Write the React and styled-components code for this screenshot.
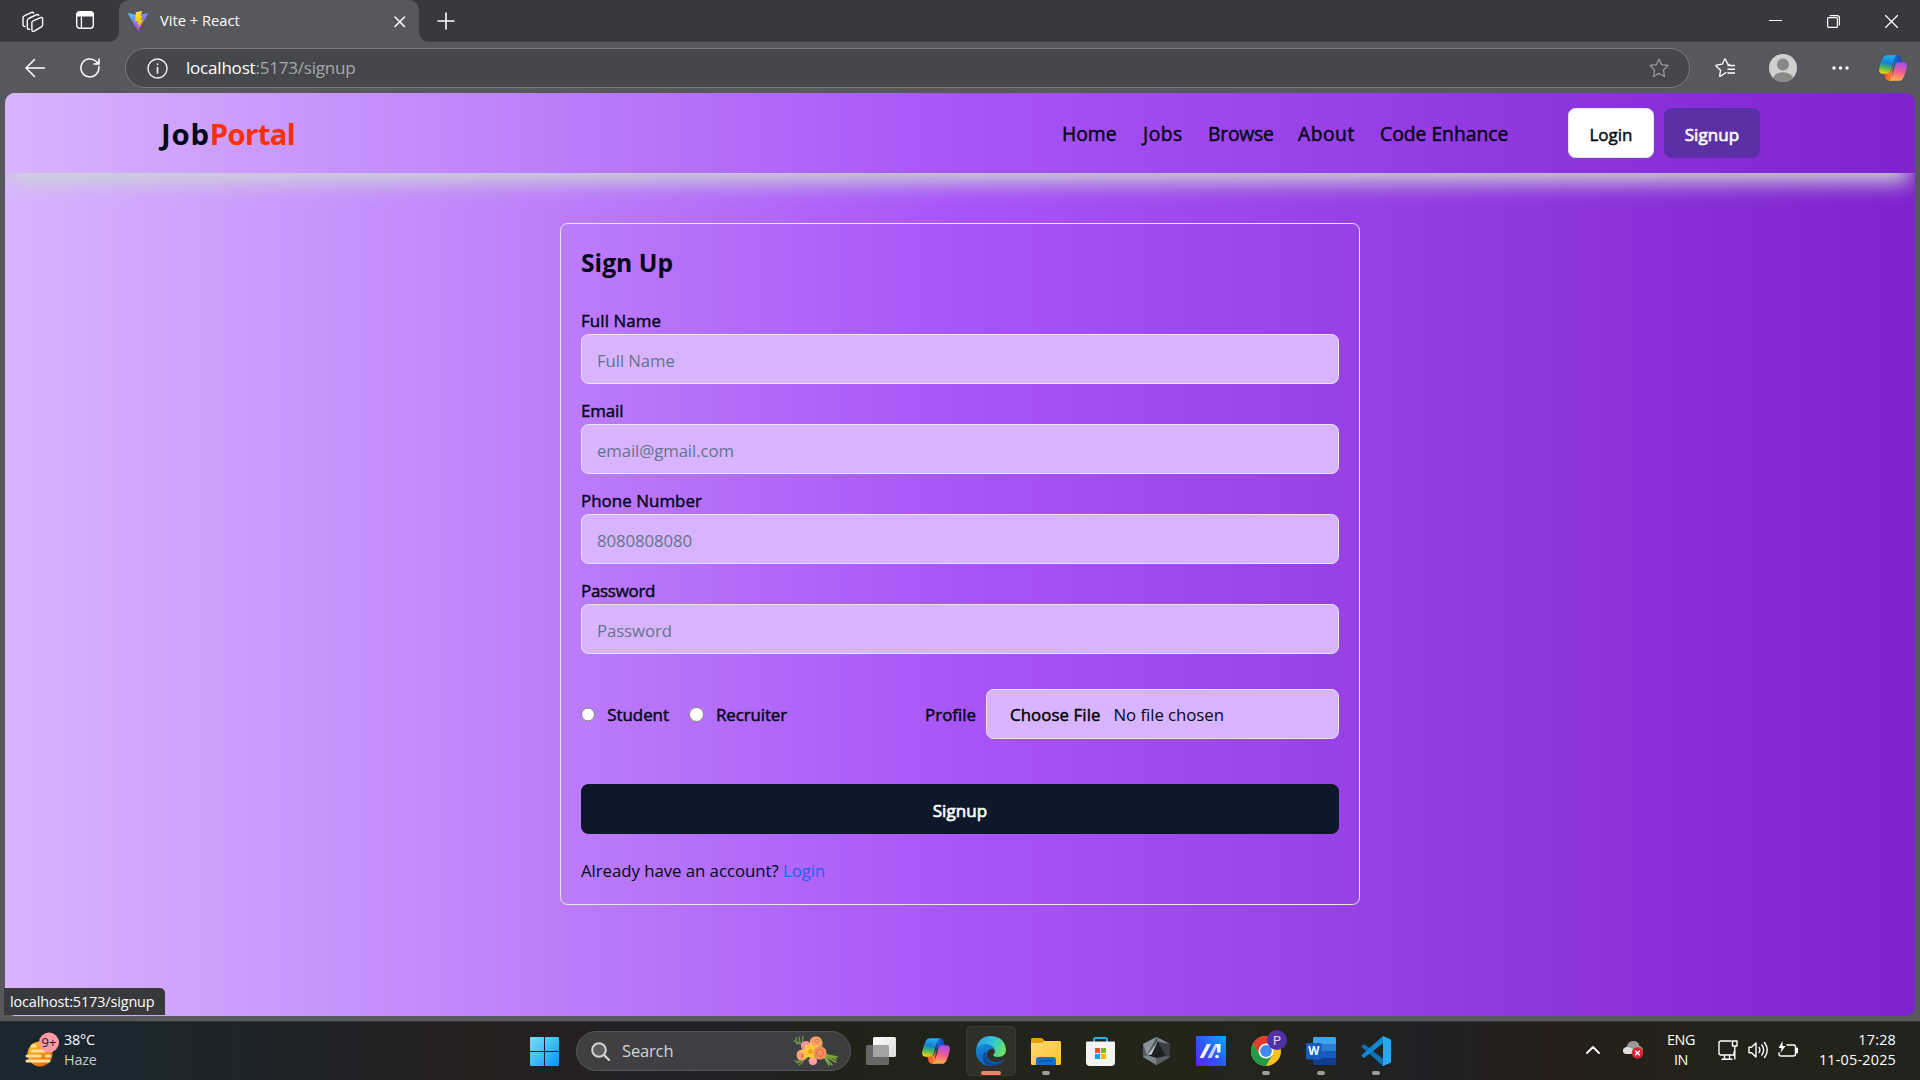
import React from 'react';
import styled, { createGlobalStyle, css } from 'styled-components';

const GlobalStyle = createGlobalStyle`
  * { box-sizing: border-box; }
  html, body { margin: 0; height: 100%; overflow: hidden; background: #57585c; }
  body { font-family: "Open Sans", "Noto Sans", sans-serif; }
`;

const purple = css`background: linear-gradient(to right, #d8b4fe, #a855f7 50%, #7e22ce);`;
const medium = css`-webkit-text-stroke: 0.45px currentColor;`;

const Screen = styled.div`
  width: 1920px; height: 1080px; display: flex; flex-direction: column; overflow: hidden; background: #57585c;
`;

/* ---------- browser chrome ---------- */
const TabBar = styled.div`
  height: 42px; display: flex; background: #38393c; border-bottom: 1px solid #414246; color: #fff;
`;
const TabTools = styled.div`
  width: 119px; padding: 11px 0 0 22px; display: flex; align-items: flex-start; gap: 32px;
`;
const Tab = styled.div`
  position: relative; width: 300px; height: 42px; display: flex; align-items: center; padding: 0 12px 0 9px;
  background: #57585c; border-radius: 10px 10px 0 0;
  &::before, &::after { content: ''; position: absolute; bottom: 0; width: 10px; height: 10px; }
  &::before { left: -10px; background: radial-gradient(circle at 0 0, transparent 9.5px, #57585c 10px); }
  &::after { right: -10px; background: radial-gradient(circle at 100% 0, transparent 9.5px, #57585c 10px); }
`;
const TabTitle = styled.span`
  flex: 1; margin-left: 12px; font-size: 14.7px; line-height: 20px; padding-bottom: 3px;
`;
const NewTab = styled.div`width: 53px; display: flex; justify-content: center; align-items: center;`;
const WindowControls = styled.div`
  margin-left: auto; display: flex; align-items: center; gap: 45px; padding: 1px 22px 0 0;
`;
const Toolbar = styled.div`
  height: 51px; display: flex; align-items: center; padding: 0 13px 0 25px; background: #57585c; color: #fff;
`;
const NavIcons = styled.div`width: 100px; display: flex; gap: 35px;`;
const Address = styled.div`
  width: 1565px; height: 40px; display: flex; align-items: center; padding: 0 20px 0 21px; border: 1px solid #7a7b7f;
  border-radius: 20px; background: #46474a; color: #a6a7a9; margin-top: 1px;
`;
const Url = styled.div`
  flex: 1; margin-left: 18px; font-size: 17px; line-height: 24px; letter-spacing: -0.2px; padding-bottom: 1px;
  b { font-weight: 400; color: #fff; }
`;
const InfoMark = styled.span`display: flex; color: #f0f0f0;`;
const ToolIcons = styled.div`margin-left: auto; display: flex; align-items: center;`;
const Slot = styled.span`display: flex; justify-content: ${p => (p.$end ? 'flex-end' : 'center')}; width: ${p => p.$w}px;`;

/* ---------- page ---------- */
const Viewport = styled.div`
  position: relative; height: 928px; padding: 0 5px;
`;
const Page = styled.div`
  height: 923px; overflow: hidden; border-radius: 10px; ${purple}
`;
const Header = styled.header`
  position: relative; height: 80px; display: flex; justify-content: center; ${purple}
  box-shadow: 0 15px 20px -6px #ccd6d6;
`;
const HeaderInner = styled.div`
  width: 1600px; display: flex; align-items: center; justify-content: space-between;
`;
const Logo = styled.h1`
  margin: 0; padding: 2px 0 0 1px; font-size: 29.3px; line-height: 36px; font-weight: 700; letter-spacing: 0.8px; color: #020817;
  span { color: #f83002; letter-spacing: -0.65px; }
`;
const HeaderRight = styled.div`display: flex; align-items: center; gap: 60px;`;
const Menu = styled.nav`display: flex; gap: 25px; padding-top: 2px;`;
const MenuItem = styled.a`
  width: ${p => p.$w}px; font-size: 19.3px; line-height: 28px; white-space: nowrap; color: #020817;
  letter-spacing: ${p => p.$ls || 0}px; text-indent: ${p => p.$indent || 0}px; ${medium}
`;
const Actions = styled.div`display: flex; gap: 10px;`;
const ActionButton = styled.button`
  width: ${p => p.$w}px; height: 50px; padding: 3px 0 0; border-radius: 7.5px; font: 400 17px/24px "Open Sans", sans-serif;
  border: 1px solid ${p => (p.$solid ? '#5b30a6' : '#e2e8f0')};
  background: ${p => (p.$solid ? '#5b30a6' : '#fff')};
  color: ${p => (p.$solid ? '#f8fafc' : '#020817')}; ${medium}
  ${p => p.$solid && '-webkit-text-stroke-width: 0.7px; letter-spacing: 0.1px;'}
`;
const Card = styled.form`
  width: 800px; height: 682px; margin: 50px auto 0; padding: 20px; display: flex; flex-direction: column;
  border: 1px solid #e5e7eb; border-radius: 7.5px;
`;
const Title = styled.h2`
  margin: 0 0 24px; padding-top: 1px; font-size: 24.7px; line-height: 35px; font-weight: 700; color: #020817;
`;
const Fields = styled.div`display: flex; flex-direction: column; gap: 10px;`;
const Field = styled.div`display: flex; flex-direction: column;`;
const Label = styled.label`
  font-size: 16.9px; line-height: ${p => (p.$inline ? 28 : 27)}px; padding-top: ${p => (p.$inline ? 1 : 3)}px;
  white-space: nowrap; color: #020817; letter-spacing: ${p => p.$ls || 0}px; ${medium}
`;
const TextInput = styled.input`
  height: 50px; padding: 3px 15px 0; border: 1px solid #e2e8f0; border-radius: 7.5px; background: #d8b4fe;
  font: 400 16.8px/24px "Open Sans", sans-serif; letter-spacing: -0.1px; outline: 0;
  &::placeholder { color: #64748b; opacity: 1; }
`;
const RoleRow = styled.div`
  height: 50px; margin-top: 35px; display: flex; align-items: center; justify-content: space-between;
`;
const Roles = styled.div`display: flex; gap: 20px;`;
const Role = styled.div`display: flex; align-items: center; gap: 12px; width: ${p => p.$w}px;`;
const Radio = styled.input`width: 15px; height: 15px; margin: 0;`;
const Profile = styled.div`display: flex; align-items: center; gap: 10px;`;
const FileBox = styled.div`
  width: 353px; height: 50px; padding: 1px 23px 0; display: flex; align-items: center; gap: 13px;
  border: 1px solid #e2e8f0; border-radius: 7.5px; background: #d8b4fe; color: #020817;
  font-size: 16.8px; letter-spacing: -0.05px;
  b { font-weight: 400; color: #000; letter-spacing: 0.1px; ${medium} }
`;
const Submit = styled.button`
  height: 50px; margin-top: 45px; padding: 3px 0 0; border: 0; border-radius: 7.5px; background: #0f172a; color: #f8fafc;
  font: 400 17px/24px "Open Sans", sans-serif; letter-spacing: 0.1px; ${medium} -webkit-text-stroke-width: 0.7px;
`;
const Hint = styled.p`
  margin: 24px 0 0; font-size: 16.8px; line-height: 25px; letter-spacing: -0.04px; color: #020817;
  a { color: #2563eb; }
`;
const StatusBubble = styled.div`
  position: absolute; left: 4px; bottom: 6px; width: 161px; height: 27px; padding-left: 6px;
  font-size: 14.4px; line-height: 27px; letter-spacing: -0.12px; color: #fff; background: #38393c; border-radius: 0 5px 0 0;
`;

/* ---------- taskbar ---------- */
const Taskbar = styled.div`
  height: 59px; display: flex; align-items: center; color: #fff; padding-right: 24px; border-top: 1px solid #303336;
  background: linear-gradient(to right, #1b262e 0, #1c252c 200px, #26201f 480px, #212127 700px, #212218 860px, #242519 1200px, #202124 1420px, #261f19 1560px, #21231b 1750px, #22231c);
`;
const Weather = styled.div`width: 519px; padding: 0 0 2px 24px; display: flex; gap: 4px; align-items: center;`;
const Lines = styled.div`
  display: flex; flex-direction: column; font-size: 14.4px; line-height: 20px; text-align: ${p => p.$align || 'left'};
  letter-spacing: ${p => p.$ls || 0}px; white-space: nowrap;
`;
const Muted = styled.span`color: #c6cacd;`;
const Apps = styled.div`display: flex; align-items: center; gap: 5px;`;
const AppTile = styled.div`
  position: relative; width: 50px; height: 50px; display: flex; align-items: center; justify-content: center; border-radius: 5px;
  ${p => p.$active && 'background: #2f3027; box-shadow: inset 0 0 0 1px #393a31;'}
  ${p => p.$open && css`
    &::after {
      content: ''; position: absolute; bottom: 1px; left: 50%; transform: translateX(-50%);
      width: ${p.$active ? 20 : 8}px; height: 4px; border-radius: 2px; background: ${p.$active ? '#f7806a' : '#9c9c98'};
    }`}
`;
const SearchPill = styled.div`
  width: 275px; height: 40px; margin: 0 0 0 2px; padding: 0 12px 0 14px; display: flex; align-items: center;
  border: 1px solid #55565a; border-radius: 20px; background: linear-gradient(to right, #423f40, #3e4046 60%, #3c3e3c);
  font-size: 16.5px; letter-spacing: -0.15px; color: #d4d4d4;
  span { flex: 1; margin-left: 12px; padding-bottom: 2px; }
`;
const Tray = styled.div`
  margin-left: auto; display: flex; align-items: center; padding-bottom: 2px;
`;

/* ---------- drawings ---------- */
const Line = ({ w, h, box, sw = 1.5, children, ...rest }) => (
  <svg width={w} height={h} viewBox={box || `0 0 ${w} ${h}`} fill="none" stroke="currentColor" strokeWidth={sw}
    strokeLinecap="round" strokeLinejoin="round" {...rest}>{children}</svg>
);

const Workspaces = () => (
  <Line w={22} h={22} sw={1.4}>
    <path d="M10.600 10.200 18.600 6.600q2-.8 2 1.300v6q0 1.400-1.200 2l-7.200 4.200q-2.300 1-2.300-1.300v-6.700q0-1.300.7-1.900Z" />
    <path d="M7.500 18.200q-2.200.4-2.200-1.900V9.600q0-1.400 1.300-2.100L14 3.800q1.900-.8 2.700.5" />
    <path d="M3 15.500Q1 15.500 1 13.300V6.900q0-1.400 1.300-2L9 1.600q1.800-.7 2.700.4" />
  </Line>
);
const TabActions = () => (
  <svg width="18" height="18" viewBox="0 0 18 18"><rect x=".7" y=".7" width="16.6" height="16.6" rx="3" fill="none" stroke="#fff" strokeWidth="1.4" />
    <path d="M.5 5.5V3.2Q.5.5 3.2.5h11.6q2.7 0 2.7 2.7v2.3Z" fill="#fff" /><path d="M5.4 5v12.5" stroke="#fff" strokeWidth="1.3" /></svg>
);
const ViteLogo = () => (
  <svg width="20" height="20" viewBox="0 0 20 20">
    <defs>
      <linearGradient id="va" x1="0" y1="0" x2=".6" y2="1"><stop stopColor="#41d1ff" /><stop offset="1" stopColor="#bd34fe" /></linearGradient>
      <linearGradient id="vb" x1=".4" y1="0" x2=".6" y2="1"><stop stopColor="#ffea83" /><stop offset=".15" stopColor="#ffdd35" /><stop offset="1" stopColor="#ffa800" /></linearGradient>
    </defs>
    <path d="M19.8 3 10.6 19.5q-.4.6-.8 0L.1 3q-.3-.8.5-.8L10 3.900l9.300-1.700q.8 0 .5.800Z" fill="url(#va)" />
    <path d="M14.400 0 7.900 1.200l-.600 9 2.700-.5-.800 3.800 1.800-.4-.9 5 5-9.300-2.900.5 2.300-4.500-2.200.3Z" fill="url(#vb)" />
  </svg>
);
const Star = ({ lines }) => (
  <Line w={20} h={20} sw={1.3}>
    {lines ? (
      <><path d="M11 14.500 5.300 18.300q-.8.300-.600-.600l.9-5.500L1 8q-.4-.700.400-.9L7.200 6.200 9.600 1.200q.400-.7.8 0l2.400 4.900 1.500.3" /><path d="M12.500 7.500h7.500M12.500 11.300h7.500M12.500 15h7.500" strokeWidth="1.500" strokeLinecap="butt" /></>
    ) : <path d="M10 1.200 12.600 6.700 19 7.500 14.400 12l1.100 6.500L10 15.400l-5.500 3.100L5.600 12 1 7.500l6.400-.8Z" stroke="#97989a" />}
  </Line>
);
const Avatar = () => (
  <svg width="28" height="28" viewBox="0 0 28 28"><defs><clipPath id="av"><circle cx="14" cy="14" r="14" /></clipPath></defs>
    <g clipPath="url(#av)"><rect width="28" height="28" fill="#d2d0ce" /><circle cx="14" cy="10.500" r="6" fill="#8a8886" /><ellipse cx="14" cy="26" rx="10.500" ry="7.800" fill="#8a8886" /></g></svg>
);
const Copilot = ({ id, size = 28 }) => (
  <svg width={size} height={size * 26 / 28} viewBox="0 0 28 26">
    <defs>
      <linearGradient id={`${id}a`} x1=".5" y1="0" x2=".3" y2="1"><stop stopColor="#22b2f0" /><stop offset=".4" stopColor="#1380d8" /><stop offset=".68" stopColor="#4cb85c" /><stop offset="1" stopColor="#f5d40c" /></linearGradient>
      <linearGradient id={`${id}b`} x1=".5" y1="0" x2=".3" y2="1"><stop stopColor="#ffae4c" /><stop offset=".45" stopColor="#f4608c" /><stop offset="1" stopColor="#a44cf0" /></linearGradient>
      <linearGradient id={`${id}c`}><stop stopColor="#1a70e0" /><stop offset="1" stopColor="#1240bc" /></linearGradient>
      <linearGradient id={`${id}d`}><stop stopColor="#f2502e" /><stop offset="1" stopColor="#ff8a3c" /></linearGradient>
    </defs>
    <path d="M15 .2h3.200q2.600 0 3.400 3l1.200 4.500h-4q-2.300 0-3 2.300l-1.500 5Z" fill={`url(#${id}c)`} />
    <path d="M13 25.800H9.800q-2.600 0-3.400-3L5.200 18.300h4q2.300 0 3-2.300l1.500-5Z" fill={`url(#${id}d)`} />
    <path d="M8.200.2H18q-2 .3-2.800 3L11.500 16q-.8 2.800-3.500 2.800H4Q-.8 18.800.3 13.600 1.500 8 3.600 3.300 5 .2 8.200.2Z" fill={`url(#${id}a)`} />
    <path d="M8.200.2H18q-2 .3-2.800 3L11.500 16q-.8 2.800-3.500 2.800H4Q-.8 18.800.3 13.600 1.500 8 3.600 3.300 5 .2 8.200.2Z" fill={`url(#${id}b)`} transform="rotate(180 14 13)" />
  </svg>
);
const HazeIcon = () => (
  <svg width="36" height="36" viewBox="0 0 36 36">
    <defs><linearGradient id="sun" x1="0" y1="0" x2=".6" y2="1"><stop stopColor="#ffc928" /><stop offset="1" stopColor="#ee6c05" /></linearGradient></defs>
    <circle cx="16" cy="22" r="12.500" fill="url(#sun)" />
    <g stroke="#fbdfa0" strokeWidth="3" strokeLinecap="round"><path d="M8 14h3M8 19h13M3 24h13M22.500 24h3M3 29h22" /></g>
    <circle cx="25" cy="10.500" r="10" fill="#ff99a4" />
    <text x="25" y="15" fontSize="13" textAnchor="middle" fill="#1b1b1b" fontFamily="Open Sans, sans-serif">9+</text>
  </svg>
);
const WindowsLogo = () => (
  <svg width="29" height="29" viewBox="0 0 29 29"><defs><linearGradient id="win" gradientUnits="userSpaceOnUse" x1="0" y1="0" x2="29" y2="29"><stop stopColor="#7ad9fb" /><stop offset=".5" stopColor="#3dbff8" /><stop offset="1" stopColor="#0a93f5" /></linearGradient></defs>
    <path d="M1 0h13v14H0V1Q0 0 1 0ZM15 0h13q1 0 1 1v13H15ZM0 15h14v14H1q-1 0-1-1ZM15 15h14v13q0 1-1 1H15Z" fill="url(#win)" /></svg>
);
const Bouquet = () => (
  <svg width="45" height="32" viewBox="0 0 45 32">
    <g stroke="#728a4a" strokeWidth="1.500" fill="none" strokeLinecap="round">
      <path d="M1 6l10 4M3 3l1 6M6 2l1 7M10 1.500 9 9M4 28l9-5M2 26l5 1M5 23l2 4M9 23l0 3M6 30l4-3" />
      <path d="M30 19 44 22M30 20l13 7M30 20l9 10M30 20l6 10M31 19l12 5" stroke="#7fa83e" />
    </g>
    <path d="M24 5l6 2-1 8ZM14 24l8 4-3 3Z" fill="#6f9647" />
    <circle cx="13" cy="11" r="5" fill="#ff8fa6" /><circle cx="20" cy="26" r="4" fill="#ff9cab" />
    <circle cx="23" cy="7.500" r="6.300" fill="#f8a06a" /><circle cx="9" cy="20" r="5.500" fill="#f9a277" /><circle cx="10" cy="21" r="2.300" fill="#e97d50" />
    <path d="M18 7l2 4 6-1-2 5 4 4-6 1-1 5-5-3-6 2 1-5-4-3 5-2 0-5 4 1Z" fill="#ffc83c" /><circle cx="17.500" cy="16.500" r="2.500" fill="#eda51e" />
    <circle cx="27" cy="18" r="6.600" fill="#f4905f" /><circle cx="27" cy="18" r="3.500" fill="none" stroke="#dc6f43" /><circle cx="24" cy="6" r="2" fill="none" stroke="#e57d4d" />
  </svg>
);
const TaskView = () => (
  <svg width="30" height="28" viewBox="0 0 30 28"><defs><linearGradient id="tv" x1="0" y1="0" x2="1" y2="1"><stop stopColor="#fff" /><stop offset="1" stopColor="#dadada" /></linearGradient></defs>
    <rect y="8" width="23" height="20" rx="1.500" fill="#676866" /><rect x="7" width="23" height="20" rx="1.500" fill="url(#tv)" /><path d="M7 8h14.500q1.500 0 1.500 1.500V20H8.500Q7 20 7 18.500Z" fill="#a3a4a3" /></svg>
);
const EdgeLogo = () => (
  <svg width="30" height="30" viewBox="0 0 30 30">
    <defs>
      <linearGradient id="ea" x1="0" y1=".3" x2="1" y2=".6"><stop stopColor="#2b9fe6" /><stop offset=".5" stopColor="#2fc4dc" /><stop offset="1" stopColor="#6fe35b" /></linearGradient>
      <linearGradient id="eb" x1="0" y1="0" x2=".5" y2="1"><stop stopColor="#1b8fe0" /><stop offset="1" stopColor="#0a5cb8" /></linearGradient>
    </defs>
    <path d="M.1 14Q1 7 9 7q9 0 10.500 7l-3.500-1.500q-6 1.500-5 8.500 2.500 5.500 9.500 5 4-.2 7-2.800.6-.3.200.6Q23.500 30 15 30 5 30 1 21-.4 17.500.1 14Z" fill="url(#eb)" />
    <path d="M10.700 15.500Q8.500 22 13 25.800q6 4.200 13.800-.8l.800-.6Q23.500 30 15.300 30 7 28.500 6.500 21q0-4 4.200-5.500Z" fill="#0d4795" />
    <path d="M.2 13.500Q2 0 15 0 28.500.8 30 13.300q.2 7.300-8 7.700-5-.1-4.700-2.200Q19 17.500 19 15 18 8.800 10.500 8 3 8 .2 13.500Z" fill="url(#ea)" />
  </svg>
);
const Folder = () => (
  <svg width="30" height="27" viewBox="0 0 30 27"><defs><linearGradient id="fo" x1="0" y1="0" x2="1" y2="1"><stop stopColor="#ffdc72" /><stop offset="1" stopColor="#fdc02b" /></linearGradient></defs>
    <path d="M0 8V1.500Q0 0 1.500 0H10q1 0 1.800.8L14 3h14.500Q30 3 30 5v4Z" fill="#dfa20c" /><path d="M0 5h10q1.500 0 2.500-1l1-1h15Q30 3 30 4.500v21q0 1.500-1.500 1.500h-27Q0 27 0 25.500Z" fill="url(#fo)" />
    <path d="M5 27v-5q0-3 3-3h14q3 0 3 3v5Z" fill="#0f72c6" /><path d="M9 22.800h12" stroke="#0b4f96" strokeWidth="1.500" strokeLinecap="round" /></svg>
);
const Store = () => (
  <svg width="30" height="29" viewBox="0 0 30 29"><path d="M8 6V2.500Q8 1 9.500 1h10Q21 1 21 2.500V6" fill="none" stroke="#27b3e8" strokeWidth="2" />
    <path d="M0 5.500Q0 4.500 1 4.500h27q1 0 1 1V25q0 4-4 4H4q-4 0-4-4Z" fill="#f4f4f4" /><path d="M9 11h5v5H9Z" fill="#f25022" /><path d="M15 11h5v5h-5Z" fill="#7fba00" /><path d="M9 17h5v5H9Z" fill="#00a4ef" /><path d="M15 17h5v5h-5Z" fill="#ffb900" /></svg>
);
const Armoury = () => (
  <svg width="27" height="28" viewBox="0 0 27 28"><path d="M13.500 0 27 7v13l-13.500 8L0 20V7Z" fill="#565d64" /><path d="M13.500 0 27 7 16 5Z" fill="#7d848b" /><path d="M0 7 13.500 0 4 18Z" fill="#8b9299" /><path d="M27 7v13l-5-1-7-14Z" fill="#3a3f44" /><path d="M0 20l4-2 9.500 3v7Z" fill="#7c8389" /><path d="M13.500 28v-7l9-2L27 20Z" fill="#595f65" /><path d="M15 4.500 22.500 19 13.500 21 4.500 18Z" fill="#1d2023" /><path d="M14.500 5 4.500 18l4-.500Z" fill="#c3c8cc" /></svg>
);
const MyAsus = () => (
  <svg width="30" height="30" viewBox="0 0 30 30"><defs><linearGradient id="ma" x1="0" y1="1" x2="1" y2="0"><stop stopColor="#5f20f5" /><stop offset=".5" stopColor="#2a5cf5" /><stop offset="1" stopColor="#08a9fb" /></linearGradient></defs>
    <rect width="30" height="30" fill="url(#ma)" /><path d="M3.500 22 10.800 8H15L7.500 22Z" fill="#f3f6ff" /><path d="M11.500 22 19 8h3L15.500 22Z" fill="#c6d3ff" /><path d="M20 8h4.500v8.500H21V12Z" fill="#fff" /><circle cx="21" cy="20.500" r="1.800" fill="#fff" /></svg>
);
const ChromeMark = styled.svg`width: 36px; height: 36px; margin: 0 0 6px 6px; flex: none;`;
const Chrome = () => (
  <ChromeMark viewBox="0 0 36 36">
    <g transform="translate(0 6)"><circle cx="15" cy="15" r="15" fill="#fcc31e" />
      <path d="M2 7.500A15 15 0 0 1 28 7.500H15L8.500 18.700Z" fill="#e33b2e" /><path d="M2 7.500A15 15 0 0 0 15 30L21.500 18.700 8.500 18.700Z" fill="#229a4a" />
      <circle cx="15" cy="15" r="7.500" fill="#fff" /><circle cx="15" cy="15" r="5.900" fill="#4286f0" /></g>
    <circle cx="26" cy="10" r="10" fill="#5130a4" />
    <text x="26" y="14.500" fontSize="12.500" textAnchor="middle" fill="#e4dcf8" fontFamily="Roboto, sans-serif">P</text>
  </ChromeMark>
);
const Word = () => (
  <svg width="30" height="28" viewBox="0 0 30 28"><path d="M7 1.500Q7 0 8.500 0h20Q30 0 30 1.500V7H7Z" fill="#41a5ee" /><path d="M7 7h23v7H7Z" fill="#2b7cd3" /><path d="M7 14h23v7H7Z" fill="#185abd" /><path d="M7 21h23v5.500q0 1.500-1.500 1.500h-20Q7 28 7 26.500Z" fill="#103f91" />
    <rect y="6" width="15.500" height="16.500" rx="1.300" fill="#185abd" /><text x="7.700" y="18.200" fontSize="11.500" fontWeight="700" textAnchor="middle" fill="#fff" fontFamily="Open Sans, sans-serif">W</text></svg>
);
const VsCode = () => (
  <svg width="30" height="30" viewBox="0 0 30 30"><path d="M.5 10.200 2.200 8.600q.7-.5 1.400 0L22 22.500V30L.6 10.900Q.2 10.500.5 10.200Z" fill="#0b72b8" /><path d="M.5 19.800l1.700 1.600q.7.500 1.400 0L22 7.500V0L.6 19.100q-.4.400-.1.700Z" fill="#1088d2" /><path d="M22 0l7 3q1 .5 1 1.500v21q0 1-1 1.500l-7 3Z" fill="#28a9f1" /><path d="M22 7.500V22.500L12.500 15Z" fill="#22231d" /></svg>
);
const CloudError = () => (
  <svg width="21" height="18" viewBox="0 0 21 18"><path d="M4 13Q0 13 0 9.500 0 6.500 3.500 6 5 0 10.500 0q5 0 6 5Q20 6 20 9.500 20 13 16.500 13Z" fill="#9a9a98" /><path d="M4 13Q0 13 0 9.500 0 6.500 4 6q4 0 7 3l4 4Z" fill="#dedede" /><circle cx="14.500" cy="12" r="5.800" fill="#dc2334" /><path d="m12.200 9.700 4.600 4.600m0-4.600-4.600 4.600" stroke="#fff" strokeWidth="1.500" /></svg>
);

const FIELDS = [
  { label: 'Full Name', hint: 'Full Name', ls: 0.1 },
  { label: 'Email', hint: 'email@gmail.com', ls: -0.1 },
  { label: 'Phone Number', hint: '8080808080', ls: 0.05 },
  { label: 'Password', hint: 'Password', ls: -0.25 },
];
const MENU = [['Home', 55], ['Jobs', 41, 0.5, 1], ['Browse', 65, -0.2], ['About', 57, 0.5], ['Code Enhance', 128]];

export default function App() {
  return (
    <Screen>
      <GlobalStyle />
      <TabBar>
        <TabTools><Workspaces /><TabActions /></TabTools>
        <Tab>
          <ViteLogo /><TabTitle>Vite + React</TabTitle>
          <Line w={14} h={14}><path d="m2 3 9.500 9.500M11.500 3 2 12.500" /></Line>
        </Tab>
        <NewTab><Line w={18} h={18} sw={1.6}><path d="M9 1v16M1 9h16" /></Line></NewTab>
        <WindowControls>
          <Line w={13} h={13} sw={1.2}><path d="M0 5.500h13" /></Line>
          <Line w={13} h={13} sw={1.2}><rect x=".6" y="2.600" width="9.800" height="9.800" rx="1" /><path d="M3 .6h7.200q2.200 0 2.200 2.200V10" /></Line>
          <Line w={13} h={13} sw={1.3}><path d="m.5.5 12 12m0-12-12 12" /></Line>
        </WindowControls>
      </TabBar>
      <Toolbar>
        <NavIcons>
          <Line w={20} h={20}><path d="M19.500 10H1M9.500 1.500 1 10l8.500 8.500" /></Line>
          <Line w={20} h={20}><path d="M18.800 8.500A9 9 0 1 1 16 3.300l2.500 2M19 1v5h-5" /></Line>
        </NavIcons>
        <Address>
          <InfoMark><Line w={21} h={21} sw={1.4}><circle cx="10.500" cy="10.500" r="9.500" /><path d="M10.500 9.500v5.500M10.500 6.200v.1" strokeWidth="1.700" /></Line></InfoMark>
          <Url><b>localhost</b>:5173/signup</Url>
          <Star />
        </Address>
        <ToolIcons>
          <Slot $w={20}><Star lines /></Slot>
          <Slot $w={96}><Avatar /></Slot>
          <Slot $w={18}><svg width="17" height="4" viewBox="0 0 17 4" fill="#fff"><circle cx="2" cy="2" r="1.700" /><circle cx="8.500" cy="2" r="1.700" /><circle cx="15" cy="2" r="1.700" /></svg></Slot>
          <Slot $w={58} $end><Copilot id="tb" /></Slot>
        </ToolIcons>
      </Toolbar>
      <Viewport>
        <Page>
          <Header>
            <HeaderInner>
              <Logo>Job<span>Portal</span></Logo>
              <HeaderRight>
                <Menu>{MENU.map(([name, w, ls, indent]) => <MenuItem key={name} $w={w} $ls={ls} $indent={indent}>{name}</MenuItem>)}</Menu>
                <Actions><ActionButton $w={86}>Login</ActionButton><ActionButton $w={96} $solid>Signup</ActionButton></Actions>
              </HeaderRight>
            </HeaderInner>
          </Header>
          <Card>
            <Title>Sign Up</Title>
            <Fields>
              {FIELDS.map(f => (
                <Field key={f.label}><Label $ls={f.ls}>{f.label}</Label><TextInput placeholder={f.hint} /></Field>
              ))}
            </Fields>
            <RoleRow>
              <Roles>
                <Role $w={88}><Radio type="radio" name="role" /><Label $inline>Student</Label></Role>
                <Role $w={98}><Radio type="radio" name="role" /><Label $inline $ls={-0.1}>Recruiter</Label></Role>
              </Roles>
              <Profile>
                <Label $inline>Profile</Label>
                <FileBox><b>Choose File</b><span>No file chosen</span></FileBox>
              </Profile>
            </RoleRow>
            <Submit type="button">Signup</Submit>
            <Hint>Already have an account? <a>Login</a></Hint>
          </Card>
        </Page>
        <StatusBubble>localhost:5173/signup</StatusBubble>
      </Viewport>
      <Taskbar>
        <Weather><HazeIcon /><Lines $ls={-0.2}><span>38°C</span><Muted>Haze</Muted></Lines></Weather>
        <Apps>
          <AppTile><WindowsLogo /></AppTile>
          <SearchPill>
            <Line w={19} h={19} sw={2}><circle cx="8" cy="8" r="6.800" fill="#5a5c5e" /><path d="m13 13 5 5" strokeWidth="2.300" /></Line>
            <span>Search</span><Bouquet />
          </SearchPill>
          <AppTile><TaskView /></AppTile>
          <AppTile><Copilot id="tk" /></AppTile>
          <AppTile $active $open><EdgeLogo /></AppTile>
          <AppTile $open><Folder /></AppTile>
          <AppTile><Store /></AppTile>
          <AppTile><Armoury /></AppTile>
          <AppTile><MyAsus /></AppTile>
          <AppTile $open><Chrome /></AppTile>
          <AppTile $open><Word /></AppTile>
          <AppTile $open><VsCode /></AppTile>
        </Apps>
        <Tray>
          <Slot $w={48}><Line w={14} h={8} sw={1.8}><path d="m1 7 6-6 6 6" /></Line></Slot>
          <Slot $w={32}><CloudError /></Slot>
          <Slot $w={64}><Lines $align="center" $ls={-0.4}><span>ENG</span><span>IN</span></Lines></Slot>
          <Slot $w={30}><Line w={20} h={20} sw={1.4}><path d="M13 1H3Q1 1 1 3v10q0 2 2 2h13V12M6.500 15v4M11.500 15v4M4 19.200h10M14.500 1h4.500v5h-4.500ZM16.800 6v13" /></Line></Slot>
          <Slot $w={30}><Line w={20} h={18} sw={1.4}><path d="M1 6.300h2.500L8 2v14l-4.500-4.300H1ZM11 6.500q1.800 2.500 0 5M13.800 4q3.700 5 0 10M16.500 1.500q5.500 7.500 0 15" /></Line></Slot>
          <Slot $w={30}><Line w={20} h={18} sw={1.4}><path d="M9 4h6.500q2 0 2 2v7q0 2-2 2H3q-2 0-2-2v-1" /><path d="M19 7.500v4" strokeWidth="2" /><path d="M4.500 0 .5 7h3l-1 5 5-7h-3Z" fill="#fff" stroke="none" /></Line></Slot>
          <Slot $w={93} $end><Lines $align="right" $ls={0.2}><span>17:28</span><span>11-05-2025</span></Lines></Slot>
        </Tray>
      </Taskbar>
    </Screen>
  );
}
